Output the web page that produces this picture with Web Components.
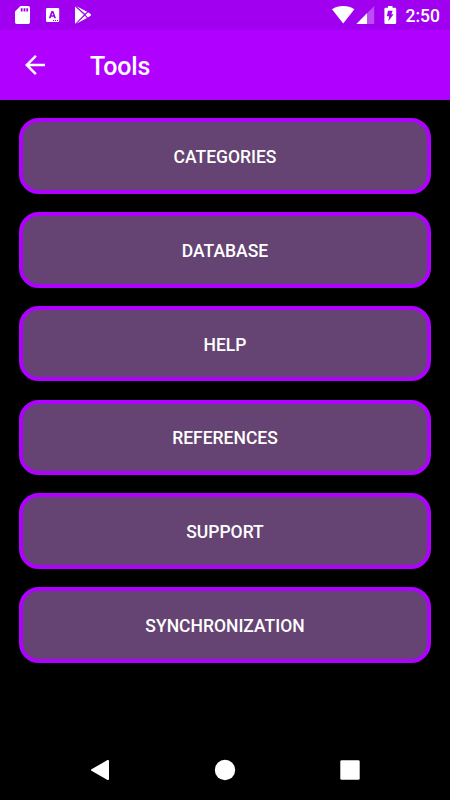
<!DOCTYPE html>
<html lang="en">
<head>
<meta charset="utf-8">
<title>Tools</title>
<style>
  html, body{margin: 0; height: 100%; background: #000;}
  body{font-family: Roboto, "Noto Sans", sans-serif; color: #fff; overflow: hidden;}
</style>
</head>
<body>
<tools-screen></tools-screen>

<script>
function define(name, html){
  const template = document.createElement("template")
  template.innerHTML = html

  customElements.define(name, class extends HTMLElement {
    constructor() {
      super();
      this.attachShadow({ mode: "open" });
      this.shadowRoot.appendChild(template.content.cloneNode(true));
    }
  })
}

define("status-bar", `
  <style>
    :host{
      display: flex; align-items: center; justify-content: space-between;
      height: 30px; box-sizing: border-box; padding: 0 10px 0 15px;
      background: #a000ef;
    }
    svg{display: block; fill: #fff;}
    .group{display: flex; align-items: center;}
    .time{font-size: 17.5px; font-weight: 500; line-height: 30px; margin-left: 9px; padding-top: 1px;}
  </style>
  <div class="group">
    <svg width="80" height="30" viewBox="15 0 80 30">
      <path fill-rule="evenodd" d="M20.5 6H28.3Q30 6 30 7.7V22.3Q30 24 28.3 24H16.7Q15 24 15 22.3V11.5ZM20.8 8.2V11.6H22.6V8.2ZM23.6 8.2V11.6H25.4V8.2ZM26.3 8.2V11.6H28.1V8.2Z"/>
      <path fill-rule="evenodd" d="M47.2 8H58Q59.2 8 59.2 9.2V20.8Q59.2 22 58 22H47.2Q46 22 46 20.8V9.2Q46 8 47.2 8ZM51.4 10.9L48.8 18.2H50.6L51.1 16.7H53.7L54.2 18.2H56L53.4 10.9ZM52.4 12.9L53.2 15.3H51.6ZM53 20V21H54V20ZM55 20V21H56V20ZM57 20V21H58V20Z"/>
      <path d="M75 6.6L84.2 14.5L75.4 23.8Q75 23.5 75 22.8ZM76 6.1L87.2 11.8L85 13.8ZM87.9 12.2L90.6 14Q91.5 14.9 90.6 15.8L87.8 17.6L85.3 14.8ZM84.8 15.5L87 18L76.2 23.8Z"/>
      <path d="M75.8 6.4L87.4 17.7M76 23.7L87.4 12.2" fill="none" stroke="#a000ef" stroke-width=".9"/>
    </svg>
  </div>
  <div class="group">
    <svg width="65" height="30" viewBox="332 0 65 30">
      <path d="M343.2 23.4L332 9.2Q337 6 343.2 6T354.4 9.2Z"/>
      <path fill-opacity=".3" d="M356.4 23.9L374.2 6V23.9Z"/>
      <path d="M356.4 23.9L367 13.3V23.9Z"/>
      <path fill-rule="evenodd" d="M388 6H392.5V7.8H395Q396.2 7.8 396.2 9V22.8Q396.2 24 395 24H385.6Q384.4 24 384.4 22.8V9Q384.4 7.8 385.6 7.8H388ZM388 10.7L386.8 16.3H389.2L388.3 21.2L393.6 14.2H391.4L392.6 10.7Z"/>
    </svg>
    <div class="time">2:50</div>
  </div>
`)

define("app-bar", `
  <style>
    :host{
      display: flex; align-items: center; height: 70px;
      box-sizing: border-box; padding-left: 20px; background: #b000ff;
    }
    svg{display: block; fill: #fff;}
    .title{
      font-size: 25px; font-weight: 500; line-height: 30px; letter-spacing: -.2px;
      margin-left: 40px; padding-top: 4px;
    }
  </style>
  <svg width="30" height="30" viewBox="0 0 24 24"><path d="M20 11H7.83l5.59-5.59L12 4l-8 8 8 8 1.41-1.41L7.83 13H20v-2z"/></svg>
  <div class="title"><slot></slot></div>
`)

define("tool-button", `
  <style>
    :host{display: block;}
    button{
      display: flex; align-items: center; justify-content: center;
      width: 100%; height: 75.5px; box-sizing: border-box; padding: 2px 0 0;
      border: 4px solid #b000ff; border-radius: 20px; background: #654372;
      color: #fff; font: 500 17.5px Roboto, "Noto Sans", sans-serif;
      text-transform: uppercase;
    }
  </style>
  <button><slot></slot></button>
`)

define("nav-bar", `
  <style>
    :host{
      display: flex; align-items: center; justify-content: space-between;
      height: 60px; box-sizing: border-box; padding: 0 90px;
    }
    svg{display: block; fill: #fff;}
  </style>
  <svg width="20" height="22" viewBox="0 0 20 22"><path d="M1.5 10.2L17.5 1.1Q19 .6 19 2V20Q19 21.4 17.5 20.9L1.5 11.8Q.4 11 1.5 10.2Z"/></svg>
  <svg width="22" height="22" viewBox="0 0 22 22"><circle cx="11" cy="11" r="10.2"/></svg>
  <svg width="20" height="20" viewBox="0 0 20 20"><rect x=".3" y=".3" width="19.4" height="19.4" rx="1.3"/></svg>
`)

define("tools-screen", `
  <style>
    :host{display: flex; flex-direction: column; height: 800px; background: #000;}
    main{
      flex: 1; display: flex; flex-direction: column; gap: 18.25px;
      padding: 18.4px 18.75px 0;
    }
  </style>
  <status-bar></status-bar>
  <app-bar>Tools</app-bar>
  <main>
    <tool-button>Categories</tool-button>
    <tool-button>Database</tool-button>
    <tool-button>Help</tool-button>
    <tool-button>References</tool-button>
    <tool-button>Support</tool-button>
    <tool-button>Synchronization</tool-button>
  </main>
  <nav-bar></nav-bar>
`)
</script>
</body>
</html>
